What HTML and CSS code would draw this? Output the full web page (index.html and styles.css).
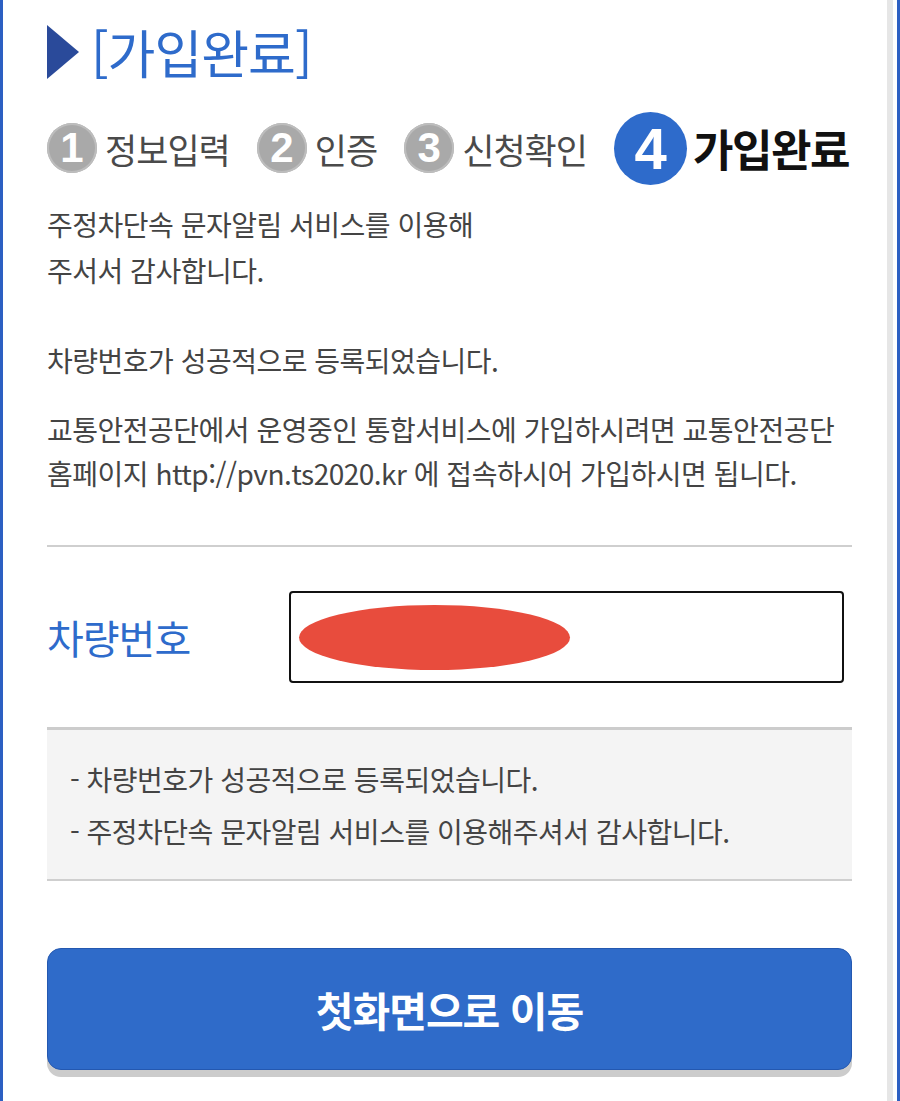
FILE: index.html
```html
<!DOCTYPE html>
<html lang="ko">
<head>
<meta charset="utf-8">
<link rel="stylesheet" href="styles.css">
</head>
<body>
<div class="frame">
  <div class="page">
    <h1 class="title"><span class="tri"></span><span class="title-text">[가입완료]</span></h1>
    <div class="steps">
      <div class="step"><span class="num">1</span><span class="label">정보입력</span></div>
      <div class="step"><span class="num">2</span><span class="label">인증</span></div>
      <div class="step"><span class="num">3</span><span class="label">신청확인</span></div>
      <div class="step active"><span class="num">4</span><span class="label">가입완료</span></div>
    </div>
    <p class="msg">주정차단속 문자알림 서비스를 이용해<br>주서서 감사합니다.</p>
    <p class="msg msg-gap">차량번호가 성공적으로 등록되었습니다.</p>
    <p class="msg msg-info">교통안전공단에서 운영중인 통합서비스에 가입하시려면 교통안전공단<br>홈페이지 http://pvn.ts2020.kr 에 접속하시어 가입하시면 됩니다.</p>
    <div class="field">
      <span class="field-label">차량번호</span>
      <div class="field-box"><span class="redact"></span></div>
    </div>
    <div class="notice">
      <p>- 차량번호가 성공적으로 등록되었습니다.</p>
      <p>- 주정차단속 문자알림 서비스를 이용해주셔서 감사합니다.</p>
    </div>
    <button class="home-btn">첫화면으로 이동</button>
  </div>
</div>
</body>
</html>
```

FILE: styles.css
```css
html, body {
  margin: 0;
  padding: 0;
  background: #fff;
}
body {
  font-family: "Noto Sans CJK KR", "Noto Sans", sans-serif;
  color: #444;
}
.frame {
  border-left: 3px solid #2c5fc2;
  border-right: 3px solid #2c5fc2;
  padding-right: 4px;
  min-height: 1101px;
  box-sizing: border-box;
}
.page {
  border-right: 6px solid #e6e6e6;
  padding: 22px 35px 40px 44px;
  min-height: 1101px;
  box-sizing: border-box;
}
.title {
  margin: 0;
  display: flex;
  align-items: center;
  gap: 12px;
  height: 60px;
  font-weight: 400;
}
.tri {
  width: 0;
  height: 0;
  border-top: 27px solid transparent;
  border-bottom: 27px solid transparent;
  border-left: 32px solid #2a4a9a;
}
.title-text {
  font-size: 52px;
  color: #2e6bcb;
  letter-spacing: -1px;
  line-height: 1;
}
.steps {
  display: flex;
  align-items: center;
  flex-wrap: nowrap;
  white-space: nowrap;
  margin-top: 26px;
  height: 80px;
}
.step {
  display: flex;
  align-items: center;
  flex-shrink: 0;
  margin-right: 27px;
}
.step .num {
  flex-shrink: 0;
  width: 50px;
  height: 50px;
  border-radius: 50%;
  background: #a9a9a9;
  box-shadow: inset 0 0 0 2px #bdbdbd;
  color: #fff;
  font-family: "Liberation Sans", Arial, sans-serif;
  font-weight: 700;
  font-size: 42px;
  display: flex;
  align-items: center;
  justify-content: center;
  margin-right: 8px;
}
.step .label {
  font-size: 35px;
  color: #4a4a4a;
  letter-spacing: -1px;
}
.step.active {
  margin-right: 0;
}
.step.active .num {
  width: 73px;
  height: 73px;
  background: #2e6bcb;
  box-shadow: none;
  font-size: 58px;
  margin-right: 6px;
}
.step.active .label {
  font-size: 44px;
  font-weight: 700;
  color: #111;
  letter-spacing: -1.5px;
}
.msg {
  margin: 0;
  font-size: 28px;
  line-height: 46px;
  color: #444;
  letter-spacing: -0.5px;
}
.steps + .msg {
  margin-top: 13px;
}
.msg-gap {
  margin-top: 44px;
}
.msg-info {
  margin-top: 24px;
  line-height: 44px;
}
.field {
  margin-top: 50px;
  border-top: 2px solid #cfcfcf;
  border-bottom: 3px solid #cccccc;
  display: flex;
  align-items: center;
  padding: 44px 8px 44px 0;
}
.field-label {
  width: 242px;
  font-size: 40px;
  color: #2e6bcb;
  letter-spacing: -1px;
}
.field-box {
  flex: 1;
  height: 88px;
  border: 2px solid #111;
  border-radius: 4px;
  display: flex;
  align-items: center;
  padding-left: 8px;
}
.redact {
  width: 271px;
  height: 65px;
  border-radius: 50%;
  background: #e84c3d;
}
.notice {
  background: #f4f4f4;
  border-bottom: 2px solid #cfcfcf;
  padding: 23px 23px 22px;
}
.notice p {
  margin: 0;
  font-size: 28px;
  line-height: 52px;
  color: #444;
  letter-spacing: -0.5px;
}
.home-btn {
  display: block;
  width: 100%;
  margin-top: 67px;
  height: 122px;
  background: #2f6bc9;
  border: 1px solid #2458b0;
  border-radius: 14px;
  box-shadow: 0 7px 0 #cccccc;
  color: #fff;
  font-family: "Noto Sans CJK KR", sans-serif;
  font-size: 41px;
  font-weight: 700;
  letter-spacing: -1px;
}
```
